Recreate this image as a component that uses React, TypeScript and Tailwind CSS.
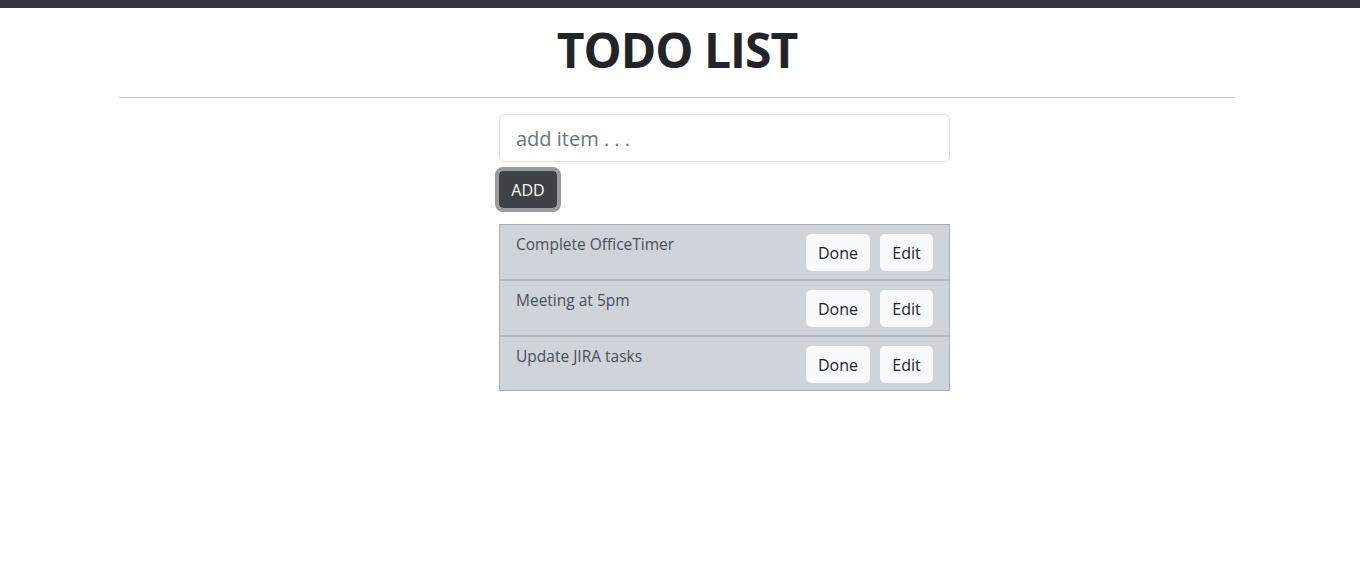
import React, { useState } from 'react'

type Todo = { id: number; text: string }

const INITIAL: Todo[] = [
  { id: 1, text: 'Complete OfficeTimer' },
  { id: 2, text: 'Meeting at 5pm' },
  { id: 3, text: 'Update JIRA tasks' },
]

function TodoRow({ todo, last }: { todo: Todo; last: boolean }) {
  return (
    <div
      className={`flex items-start justify-between bg-[#ced4da] pl-[16px] pr-[16px] ${
        last ? 'h-[53px]' : 'h-[56px] border-b-2 border-[#b3b9bf]'
      }`}
    >
      <span className="pt-[8px] text-[15.5px] text-[#495057]">{todo.text}</span>
      <div className="flex gap-[10px] pt-[9px]">
        <button className="h-[37px] w-[64px] rounded-[5px] bg-[#f8f9fa] text-[16px] text-[#212529]">
          Done
        </button>
        <button className="h-[37px] w-[53px] rounded-[5px] bg-[#f8f9fa] text-[16px] text-[#212529]">
          Edit
        </button>
      </div>
    </div>
  )
}

export default function App() {
  const [value, setValue] = useState('')
  const [todos] = useState<Todo[]>(INITIAL)

  return (
    <div className="min-h-screen bg-white font-['Open_Sans',sans-serif]">
      <div className="h-[8px] bg-[#35363a]" />
      <div className="flex h-[89px] justify-center pr-[6px] pt-[13px]">
        <h1 className="text-[48px] font-bold leading-[58px] tracking-[-1px] text-[#212529]">TODO LIST</h1>
      </div>
      <div className="ml-[119px] w-[1116px] border-t border-[#c8c8c8]" />
      <div className="ml-[499px] mt-[16px] flex w-[451px] flex-col items-start">
        <input
          value={value}
          onChange={(e) => setValue(e.target.value)}
          placeholder="add item . . ."
          className="h-[48px] w-full rounded-[5px] border border-[#dee2e6] px-[16px] text-[20px] text-[#212529] placeholder:text-[#6c757d] outline-none"
        />
        <button className="mt-[9px] h-[37px] w-[58px] rounded-[4px] bg-[#3e4145] text-[16px] text-white outline-[4px] outline-solid outline-[#999b9e]">
          ADD
        </button>
        <div className="mt-[16px] w-full border border-[#a9aeb3]">
          {todos.map((t, i) => (
            <TodoRow key={t.id} todo={t} last={i === todos.length - 1} />
          ))}
        </div>
      </div>
    </div>
  )
}
